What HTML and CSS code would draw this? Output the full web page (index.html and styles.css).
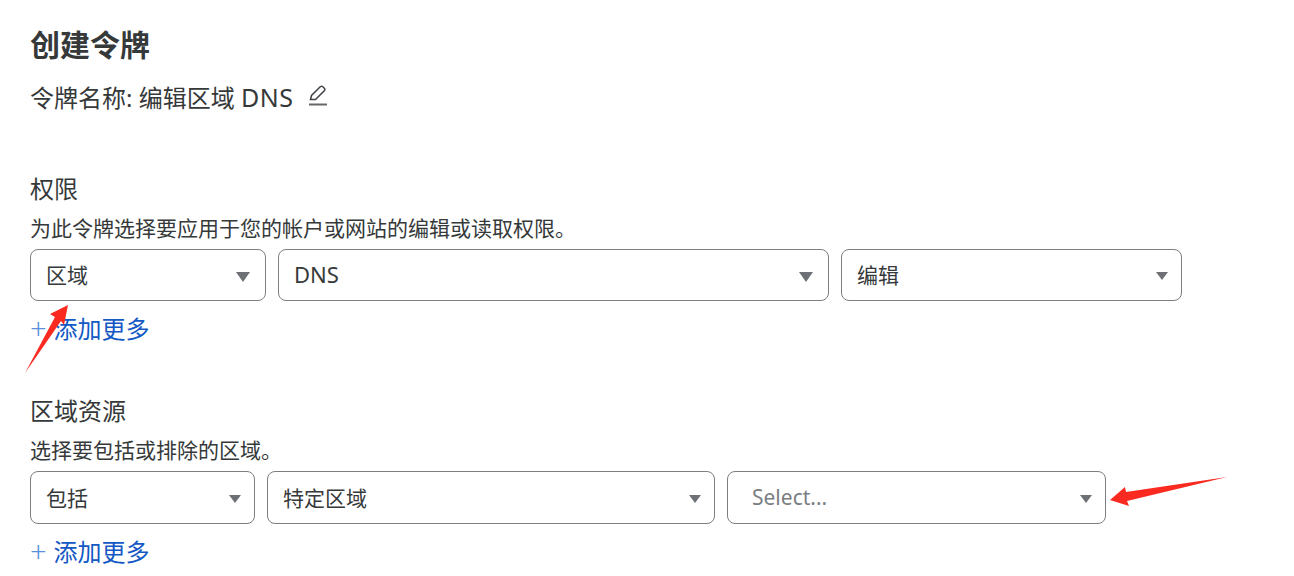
FILE: index.html
```html
<!DOCTYPE html>
<html lang="zh-CN">
<head>
  <meta charset="UTF-8" />
  <title>创建令牌</title>
  <link rel="stylesheet" href="styles.css">
</head>
<body>

  <main class="page">
    <h1>创建令牌</h1>
    <div class="token-name">
      <span>令牌名称: 编辑区域 <span class="latin">DNS</span></span>
      <svg class="edit-icon" width="20" height="22" viewBox="0 0 20 22" fill="none" stroke="#3f4347">
        <path d="M2.500 14.500 L3.500 10.500 L12.500 1.500 Q13.500 .8 14.500 1.500 L16.500 3.500 Q17.200 4.500 16.500 5.500 L7.500 14.500 Z" stroke-width="1.500" />
        <path d="M1 19.500 H19" stroke="#666" stroke-width="2" />
      </svg>
    </div>

    <section class="group group-permissions">
      <h2>权限</h2>
      <p class="hint">为此令牌选择要应用于您的帐户或网站的编辑或读取权限。</p>
      <div class="row">
        <div class="select w-236"><span>区域</span><i class="caret"></i></div>
        <div class="select w-551"><span class="select-latin">DNS</span><i class="caret"></i></div>
        <div class="select w-341 tight"><span>编辑</span><i class="caret caret-small"></i></div>
      </div>
      <a class="add-more" href="#"><span class="plus">+</span>添加更多</a>
    </section>

    <section class="group group-zones">
      <h2>区域资源</h2>
      <p class="hint">选择要包括或排除的区域。</p>
      <div class="row">
        <div class="select w-225 tight"><span>包括</span><i class="caret caret-small"></i></div>
        <div class="select w-448 tight"><span>特定区域</span><i class="caret caret-small"></i></div>
        <div class="select w-379 tight placeholder"><span>Select...</span><i class="caret caret-small"></i></div>
      </div>
      <a class="add-more" href="#"><span class="plus">+</span>添加更多</a>
    </section>
  </main>

  <!-- red annotation arrows drawn on top of the screenshot -->
  <svg class="arrow arrow-up" width="50" height="74" viewBox="0 0 50 74">
    <path d="M44 1 L26 10 L31 13 L1 69 L37 17 L40 21 Z" fill="#fb2a20" />
  </svg>
  <svg class="arrow arrow-left" width="122" height="34" viewBox="0 0 122 34">
    <path d="M1 25 L16 12 L17 17 L118 2 L18 26 L20 31 Z" fill="#fb2a20" />
  </svg>

</body>
</html>
```

FILE: styles.css
```css
body {
  margin: 0;
  background: #fff;
  color: #36393a;
  font-family: "Noto Sans", "Noto Sans CJK SC", sans-serif;
  position: relative;
  height: 576px;
  overflow: hidden;
}

.page {
  padding: 23px 30px 0;
}

h1 {
  margin: 0;
  font-size: 30px;
  line-height: 44px;
  font-weight: 700;
}

.token-name {
  display: flex;
  align-items: center;
  gap: 15px;
  margin-top: 8px;
  font-size: 24px;
  line-height: 44px;
}

.latin {
  font-size: 25px;
  letter-spacing: 0.5px;
}

.edit-icon {
  margin-top: -4px;
}

.group-permissions {
  margin-top: 51px;
}

.group-zones {
  margin-top: 46px;
}

h2 {
  margin: 0;
  font-size: 24px;
  font-weight: 400;
  line-height: 36px;
}

.hint {
  margin: 6px 0 0;
  font-size: 21px;
  line-height: 30px;
}

.row {
  display: flex;
  gap: 12px;
  margin-top: 6px;
}

.select {
  box-sizing: border-box;
  height: 52px;
  border: 1px solid #7b7e82;
  border-radius: 8px;
  display: flex;
  align-items: center;
  justify-content: space-between;
  padding: 0 15px 2px;
  font-size: 21px;
}

.select.tight {
  padding-right: 13px;
}

.select-latin {
  font-size: 22px;
}

.group-zones .select {
  height: 53px;
}

.w-236 { width: 236px; }
.w-551 { width: 551px; }
.w-341 { width: 341px; }
.w-225 { width: 225px; }
.w-448 { width: 448px; }
.w-379 { width: 379px; padding-left: 24px; }

.placeholder {
  color: #7b7e82;
}

.caret {
  width: 0;
  height: 0;
  margin-top: 5px;
  border-left: 7px solid transparent;
  border-right: 7px solid transparent;
  border-top: 10px solid #6d7175;
}

.caret-small {
  margin-top: 4px;
  border-left-width: 6.500px;
  border-right-width: 6.500px;
  border-top-width: 8px;
}

.add-more {
  display: flex;
  align-items: center;
  gap: 7px;
  margin-top: 10px;
  color: #1358c4;
  font-size: 24px;
  line-height: 36px;
  text-decoration: none;
}

.plus {
  margin-top: -2px;
  color: #5b8fdc;
  font-size: 29px;
  font-weight: 300;
}

.arrow {
  position: absolute;
}

.arrow-up {
  left: 24px;
  top: 304px;
}

.arrow-left {
  left: 1109px;
  top: 475px;
}
```
